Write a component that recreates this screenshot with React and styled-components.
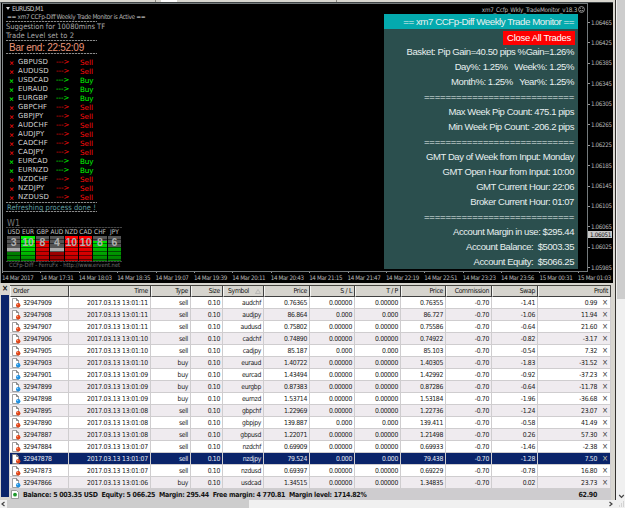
import styled, { createGlobalStyle } from 'styled-components';

const GlobalStyle = createGlobalStyle`
	* {
		box-sizing: border-box;
	}

	body {
		margin: 0;
		overflow: hidden;
		background: #f0f0f0;
		font-family: 'DejaVu Sans Condensed', 'DejaVu Sans', sans-serif;
	}
`;

const Page = styled.div`
	display: flex;
	width: 625px;
	height: 508px;
`;

const Main = styled.div`
	display: flex;
	flex-direction: column;
	width: 617px;
`;

const WindowFrame = styled.div`
	width: 616px;
	height: 500px;
	border-right: 1px solid #34322f;
	background: #d8d6d0;
`;

const TopStrip = styled.div`
	height: 2px;
	background: linear-gradient(
		90deg,
		#d9d7d0 0 155px,
		#8b8982 155px 156px,
		#d9d7d0 156px 161px,
		#fff 161px 177px,
		#d9d7d0 177px 336px,
		#8b8982 336px 337px,
		#d9d7d0 337px
	);
`;

/* ---------- chart ---------- */

const Chart = styled.div`
	width: 613px;
	height: 281px;
	padding-left: 1px;
	border-top: 1px solid #3f4445;
	border-left: 1px solid #8e9294;
	background: #000;
`;

const ChartRow = styled.div`
	display: flex;
	height: 269px;
`;

const Plot = styled.div`
	display: flex;
	justify-content: space-between;
	width: 586px;
	border: 1px solid #73797b;
	border-left-color: #85898b;
`;

const Signals = styled.div`
	width: 160px;
	padding-left: 3px;
`;

const Line = styled.div`
	height: ${(p) => p.$h || 9}px;
	padding-left: ${(p) => p.$x || 0}px;
	line-height: ${(p) => p.$lh || p.$h || 9}px;
	font-size: ${(p) => p.$size}px;
	letter-spacing: ${(p) => p.$ls || 0}px;
	color: ${(p) => p.$color};
	white-space: nowrap;
`;

const BarEnd = styled(Line)`
	font-family: 'Liberation Sans', sans-serif;
`;

const Timeframe = styled(Line)`
	padding-top: 8px;
	font-family: 'DejaVu Sans', sans-serif;
`;

const Caret = styled.span`
	display: inline-block;
	margin: 0 2px 1px 0;
	border: 2px solid transparent;
	border-top: 3px solid #d8d8d8;
	border-bottom: 0;
`;

const Dashes = styled.div`
	width: ${(p) => p.$w || 91}px;
	height: 1px;
	background: repeating-linear-gradient(90deg, ${(p) => p.$color || '#8a8a8a'} 0 2px, #222 2px 3px);
`;

const PairList = styled.div`
	padding: 4px 0 0 3px;
`;

const PairRow = styled.div`
	display: grid;
	grid-template-columns: 9px 38px 24px 20px;
	align-items: center;
	height: 9px;
	line-height: 9px;
	font-family: 'DejaVu Sans', sans-serif;
	font-size: 7px;
	white-space: nowrap;
	color: ${(p) => (p.$buy ? '#00ff00' : '#ff0c0c')};
`;

const Mark = styled.span`
	font-size: 6px;
	font-weight: bold;
`;

const PairName = styled.span`
	color: #d2d2d2;
	letter-spacing: 0.1px;
`;

const Action = styled.span`
	font-size: 7.2px;
	letter-spacing: ${(p) => (p.$buy ? -0.1 : 0)}px;
`;

const Meter = styled.div`
	display: grid;
	grid-template-columns: repeat(8, 13.4px);
	column-gap: 1px;
	width: 116px;
	margin-left: 1px;
`;

const MeterName = styled.span`
	height: 8px;
	line-height: 8px;
	text-align: center;
	font-size: 6.5px;
	color: #c4c4c4;
`;

const MeterBar = styled.div`
	height: 25px;
	line-height: 12px;
	text-align: center;
	font-family: 'Liberation Sans', sans-serif;
	font-size: 10.5px;
	font-weight: bold;
	color: #b0b0b0;
	background:
		repeating-linear-gradient(180deg, transparent 0 3px, rgba(0, 0, 0, 0.5) 3px 4px),
		linear-gradient(180deg, ${(p) => p.$fill});
`;

const PlotRight = styled.div`
	display: flex;
	flex-direction: column;
	align-items: flex-end;
	width: 206px;
`;

const Indicator = styled.div`
	display: flex;
	align-items: center;
	height: 10px;
	padding: 1px 2px 0 0;
	gap: 1px;
	font-size: 6.3px;
	letter-spacing: -0.25px;
	color: #bebebe;
`;

const Panel = styled.div`
	display: flex;
	flex-direction: column;
	align-items: flex-end;
	width: 194px;
	height: 255px;
	margin-right: 9px;
	padding-right: 4px;
	font-family: 'Liberation Sans', sans-serif;
	font-size: 9.5px;
	color: #e8f0f0;
	background: #2b4f4e;
`;

const PanelTitle = styled.div`
	width: 194px;
	height: 15px;
	margin-right: -4px;
	padding-right: 4px;
	line-height: 16px;
	text-align: right;
	font-size: 9.8px;
	letter-spacing: -0.5px;
	background: #04aaae;
`;

const CloseButton = styled.button`
	width: 72px;
	height: 14px;
	margin: 2px -1px 0 0;
	padding: 0;
	border: 0;
	font: inherit;
	line-height: 14px;
	letter-spacing: -0.3px;
	color: #fff;
	background: #fe0000;
`;

const PanelLines = styled.div`
	margin-top: -1px;
	text-align: right;
`;

const PanelLine = styled.div`
	height: 15px;
	line-height: 15px;
	letter-spacing: ${(p) => p.$ls}px;
	white-space: pre;
`;

const PriceAxis = styled.div`
	display: flex;
	flex-direction: column;
	padding-top: 14.5px;
`;

const Price = styled.div`
	display: flex;
	flex-shrink: 0;
	align-items: center;
	height: 20.45px;
	padding-bottom: 10.45px;
	font-size: 6.2px;
	line-height: 10px;
	letter-spacing: -0.35px;
	color: #b9b9b9;

	&:last-child {
		height: 10px;
		padding-bottom: 0;
	}

	&::before {
		content: '';
		width: 2px;
		height: 1px;
		margin-right: 1px;
		background: #999;
	}
`;

const Bid = styled.div`
	position: absolute;
	left: 588px;
	top: 231px;
	width: 24px;
	height: 7px;
	padding-left: 2px;
	font-size: 6.2px;
	line-height: 7px;
	letter-spacing: -0.3px;
	color: #111;
	background: #c9c9c9;
`;

const TimeAxis = styled.div`
	display: flex;
	height: 11px;
`;

const TimeLabel = styled.span`
	flex: 0 0 38.4px;
	height: 11px;
	line-height: 9px;
	font-size: 6.2px;
	letter-spacing: -0.35px;
	white-space: nowrap;
	color: #b9b9b9;

	&::before {
		content: '';
		display: block;
		width: 1px;
		height: 1px;
		background: #999;
	}
`;

/* ---------- terminal ---------- */

const Terminal = styled.div`
	display: flex;
	height: 217px;
	padding: 2px 0 3px 1px;
`;

const Side = styled.div`
	display: flex;
	flex-direction: column;
	align-items: center;
	width: 9px;
	padding-right: 1px;
`;

const SideFill = styled.div`
	width: 8px;
	flex: 1;
	margin-top: 1px;
	background: #0a246a;
`;

const CloseMark = styled.div`
	height: 9px;
	font-size: 8px;
	font-weight: bold;
	line-height: 8px;
	color: #111;
`;

const Table = styled.div`
	width: 601px;
	border-top: 1px solid #45443f;
`;

const columns = '59px 82px 40px 32px 41px 46px 45px 46px 45px 46px 46px 73px';

const HeadRow = styled.div`
	display: grid;
	grid-template-columns: ${columns};
	height: 11px;
`;

const HeadCell = styled.span`
	display: flex;
	align-items: center;
	justify-content: ${(p) => (p.$left ? 'flex-start' : 'flex-end')};
	padding: 0 2px 0 ${(p) => (p.$sorted ? 4 : 2)}px;
	gap: 6px;
	border-right: 1px solid #404040;
	border-bottom: 1px solid #404040;
	border-left: 1px solid #f5f5f2;
	background: #d6d4ce;
	font-size: 6.8px;
	letter-spacing: -0.3px;
	color: #111;
`;

const Row = styled.div`
	display: grid;
	grid-template-columns: ${columns};
	height: 12px;
	color: ${(p) => (p.$selected ? '#e4e8f2' : '#1a1a1a')};
	background: ${(p) => (p.$selected ? '#0a246a' : p.$odd ? '#efebef' : '#fff')};
`;

const Cell = styled.span`
	display: flex;
	align-items: center;
	justify-content: ${(p) => (p.$left ? 'flex-start' : 'flex-end')};
	padding: 0 ${(p) => (p.$last ? 0 : 2)}px 0 1px;
	gap: ${(p) => (p.$last ? 1 : 2)}px;
	border-right: 1px solid #cfcdcf;
	border-bottom: 1px solid #cfcdcf;
	font-size: 6.8px;
	letter-spacing: ${(p) => (p.$wide ? -0.18 : -0.32)}px;
	white-space: nowrap;
`;

const RowClose = styled.span`
	width: 12px;
	padding-left: 4px;
	font-size: 8px;
	color: ${(p) => (p.$selected ? '#c4c0a8' : '#444')};
`;

const Footer = styled.div`
	display: flex;
	align-items: center;
	justify-content: space-between;
	height: 11px;
	padding: 0 14px 0 1px;
	font-size: 7px;
	font-weight: bold;
	letter-spacing: -0.28px;
	color: #141414;
	background: #cecccf;
`;

const FooterText = styled.span`
	display: flex;
	align-items: center;
	gap: 4px;
	white-space: pre;
`;

/* ---------- scroll bars ---------- */

const HScroll = styled.div`
	display: flex;
	align-items: center;
	justify-content: space-between;
	height: 8px;
	padding-right: 3px;
	background: #f0f0f0;
`;

const HThumb = styled.div`
	width: 242px;
	height: 8px;
	margin-right: auto;
	background: #cdcdcd;
`;

const VScroll = styled.div`
	display: flex;
	flex-direction: column;
	align-items: center;
	width: 8px;
	background: #f0f0f0;
`;

const VThumb = styled.div`
	width: 8px;
	height: 299px;
	margin-bottom: auto;
	background: #cdcdcd;
`;

const Chevron = ({ d }) => (
	<svg width="7" height="8" viewBox="0 0 7 8">
		<path d={d} fill="none" stroke="#444" strokeWidth="1.2" />
	</svg>
);

const OrderIcon = ({ type }) => (
	<svg width="10" height="10" viewBox="0 0 10 10">
		<path d="M1.5 .5h4l2 2v7h-6z" fill="#fff" stroke="#8a8a8a" strokeWidth=".8" />
		<path d="M5.5 .5v2h2" fill="none" stroke="#555" strokeWidth=".7" />
		<circle cx="7.2" cy="7.3" r="2.2" fill={type === 'buy' ? '#1e8fe0' : '#e04418'} />
		<circle cx="6.6" cy="6.5" r=".7" fill={type === 'buy' ? '#8fd0ff' : '#ff9a70'} />
	</svg>
);

const BalanceIcon = () => (
	<svg width="8" height="9" viewBox="0 0 8 9">
		<path d="M.5 .5h5l2 2v6h-7z" fill="#fff" stroke="#888" strokeWidth=".8" />
		<circle cx="4" cy="4.7" r="1.9" fill="#1f9a2c" />
	</svg>
);

const Smiley = () => (
	<svg width="7" height="7" viewBox="0 0 7 7">
		<circle cx="3.5" cy="3.5" r="2.9" fill="none" stroke="#bbb" strokeWidth=".8" />
		<path d="M2.3 2.5h.7M4 2.5h.7M2 4.3q1.5 1.2 3 0" fill="none" stroke="#bbb" strokeWidth=".7" />
	</svg>
);

const pairs = [
	['GBPUSD', 0],
	['AUDUSD', 0],
	['USDCAD', 1],
	['EURAUD', 1],
	['EURGBP', 1],
	['GBPCHF', 0],
	['GBPJPY', 0],
	['AUDCHF', 0],
	['AUDJPY', 0],
	['CADCHF', 0],
	['CADJPY', 0],
	['EURCAD', 1],
	['EURNZD', 1],
	['NZDCHF', 0],
	['NZDJPY', 0],
	['NZDUSD', 0],
];

const meters = [
	['USD', 3, '#555 0 44%, #aaa 44% 66%, #007c00 66%'],
	['EUR', 10, '#00f000 0 30%, #00c800 60%, #007c00'],
	['GBP', 8, '#555 0 22%, #ee0000 22%, #b00000'],
	['AUD', 4, '#555 0 44%, #aaa 44% 66%, #9c0000 66%'],
	['NZD', 10, '#ff0000 0 30%, #e00000 60%, #b80000'],
	['CAD', 10, '#ff0000 0 30%, #e00000 60%, #b80000'],
	['CHF', 8, '#555 0 22%, #00e000 22%, #007c00'],
	['JPY', 6, '#555 0 44%, #00a800 44%, #007c00'],
];

const rule = '='.repeat(28);

const stats = [
	'Basket: Pip Gain=40.50 pips %Gain=1.26%',
	'Day%: 1.25%   Week%: 1.25%',
	'Month%: 1.25%   Year%: 1.25%',
	rule,
	'Max Week Pip Count: 475.1 pips',
	'Min Week Pip Count: -206.2 pips',
	rule,
	'GMT Day of Week from Input: Monday',
	'GMT Open Hour from Input: 10:00',
	'GMT Current Hour: 22:06',
	'Broker Current Hour: 01:07',
	rule,
	'Account Margin in use: $295.44',
	'Account Balance:  $5003.35',
	'Account Equity:  $5066.25',
];

const prices = [6465, 6425, 6385, 6345, 6305, 6265, 6225, 6185, 6145, 6105, 6065, 6025, 5985];

const times = [
	'14 Mar 2017',
	'14 Mar 17:31',
	'14 Mar 18:03',
	'14 Mar 18:35',
	'14 Mar 19:07',
	'14 Mar 19:39',
	'14 Mar 20:11',
	'14 Mar 20:43',
	'14 Mar 21:15',
	'14 Mar 21:47',
	'14 Mar 22:19',
	'14 Mar 22:51',
	'14 Mar 23:23',
	'14 Mar 23:56',
	'15 Mar 00:31',
	'15 Mar 01:03',
];

const heads = ['Order', 'Time', 'Type', 'Size', 'Symbol', 'Price', 'S / L', 'T / P', 'Price', 'Commission', 'Swap', 'Profit'];

// order, time, type, symbol, open price, current price, swap, profit
const orders = [
	['32947909', '11', 'sell', 'audchf', '0.76365', '0.76355', '-1.41', '0.99'],
	['32947908', '11', 'sell', 'audjpy', '86.864', '86.727', '-1.06', '11.94'],
	['32947907', '11', 'sell', 'audusd', '0.75802', '0.75586', '-0.64', '21.60'],
	['32947906', '10', 'sell', 'cadchf', '0.74890', '0.74922', '-0.82', '-3.17'],
	['32947905', '10', 'sell', 'cadjpy', '85.187', '85.103', '-0.54', '7.32'],
	['32947903', '10', 'buy', 'euraud', '1.40722', '1.40305', '-1.83', '-31.52'],
	['32947901', '09', 'buy', 'eurcad', '1.43494', '1.42992', '-0.92', '-37.23'],
	['32947899', '09', 'buy', 'eurgbp', '0.87383', '0.87286', '-0.64', '-11.78'],
	['32947898', '09', 'buy', 'eurnzd', '1.53714', '1.53184', '-1.96', '-36.68'],
	['32947895', '08', 'sell', 'gbpchf', '1.22969', '1.22736', '-1.24', '23.07'],
	['32947890', '08', 'sell', 'gbpjpy', '139.887', '139.411', '-0.58', '41.49'],
	['32947887', '08', 'sell', 'gbpusd', '1.22071', '1.21498', '0.26', '57.30'],
	['32947884', '07', 'sell', 'nzdchf', '0.69909', '0.69933', '-1.46', '-2.38'],
	['32947878', '07', 'sell', 'nzdjpy', '79.524', '79.438', '-1.28', '7.50'],
	['32947873', '07', 'sell', 'nzdusd', '0.69397', '0.69229', '-0.78', '16.80'],
	['32947866', '06', 'buy', 'usdcad', '1.34515', '1.34835', '0.02', '23.73'],
];

const SignalPane = () => (
	<Signals>
		<Line $size={6.6} $lh={10} $ls={-0.5} $color="#cfcfcf">
			<Caret />
			EURUSD,M1
		</Line>
		<Line $size={6.5} $h={8} $x={1} $ls={-0.37} $color="#b0b0b0">
			== xm7 CCFp-Diff Weekly Trade Monitor is Active ==
		</Line>
		<Dashes />
		<Line $size={7.5} $color="#a9a9a9">Suggestion for 10080mins TF</Line>
		<Line $size={7.5} $ls={0.1} $color="#a9a9a9">Trade Level set to 2</Line>
		<Dashes />
		<BarEnd $size={10} $h={12} $lh={13} $x={3} $ls={-0.27} $color="#e9967a">
			Bar end: 22:52:09
		</BarEnd>
		<Dashes />
		<PairList>
			{pairs.map(([name, buy]) => (
				<PairRow key={name} $buy={buy}>
					<Mark>×</Mark>
					<PairName>{name}</PairName>
					<span>---&gt;</span>
					<Action $buy={buy}>{buy ? 'Buy' : 'Sell'}</Action>
				</PairRow>
			))}
		</PairList>
		<Dashes />
		<Line $size={7.5} $h={8} $lh={9} $x={1} $ls={0.05} $color="#5f9ea0">Refreshing process done !</Line>
		<Dashes />
		<Timeframe $size={8} $h={15} $lh={8} $x={1} $color="#777">W1</Timeframe>
		<Dashes $w={116} $color="#444" />
		<Meter>
			{meters.map(([name]) => (
				<MeterName key={name}>{name}</MeterName>
			))}
			{meters.map(([name, value, fill]) => (
				<MeterBar key={name} $fill={fill}>{value}</MeterBar>
			))}
		</Meter>
		<Dashes $w={116} $color="#444" />
		<Line $size={5.8} $h={6} $x={3} $ls={-0.01} $color="#707070">CCFp-Diff - FerruFx - http://www.ervent.net</Line>
	</Signals>
);

const ChartPane = () => (
	<Chart>
		<ChartRow>
			<Plot>
				<SignalPane />
				<PlotRight>
					<Indicator>
						xm7_Ccfp_Wkly_TradeMonitor_v18.3
						<Smiley />
					</Indicator>
					<Panel>
						<PanelTitle>== xm7 CCFp-Diff Weekly Trade Monitor ==</PanelTitle>
						<CloseButton>Close All Trades</CloseButton>
						<PanelLines>
							{stats.map((text, i) => (
								<PanelLine key={i} $ls={text === rule ? -0.19 : -0.42}>{text}</PanelLine>
							))}
						</PanelLines>
					</Panel>
				</PlotRight>
			</Plot>
			<PriceAxis>
				{prices.map((p) => (
					<Price key={p}>1.0{p}</Price>
				))}
			</PriceAxis>
			<Bid>1.06051</Bid>
		</ChartRow>
		<TimeAxis>
			{times.map((t) => (
				<TimeLabel key={t}>{t}</TimeLabel>
			))}
		</TimeAxis>
	</Chart>
);

const TerminalPane = () => (
	<Terminal>
		<Side>
			<CloseMark>×</CloseMark>
			<SideFill />
		</Side>
		<Table>
			<HeadRow>
				{heads.map((h, i) => (
					<HeadCell key={i} $left={i === 0 || i === 4} $sorted={i === 4}>
						{h}
						{i === 4 && (
							<svg width="6" height="5" viewBox="0 0 6 5">
								<path d="M.5 4.5L3 .5l2.5 4z" fill="none" stroke="#aaa" strokeWidth=".7" />
							</svg>
						)}
					</HeadCell>
				))}
			</HeadRow>
			{orders.map(([id, sec, type, symbol, open, price, swap, profit], i) => {
				const zero = open.split('.')[1].length === 3 ? '0.000' : '0.00000';
				const selected = id === '32947878';
				return (
					<Row key={id} $odd={i % 2} $selected={selected}>
						<Cell $left>
							<OrderIcon type={type} />
							{id}
						</Cell>
						<Cell $wide>2017.03.13 13:01:{sec}</Cell>
						<Cell>{type}</Cell>
						<Cell>0.10</Cell>
						<Cell>{symbol}</Cell>
						<Cell>{open}</Cell>
						<Cell>{zero}</Cell>
						<Cell>{zero}</Cell>
						<Cell>{price}</Cell>
						<Cell>-0.70</Cell>
						<Cell>{swap}</Cell>
						<Cell $last>
							{profit}
							<RowClose $selected={selected}>×</RowClose>
						</Cell>
					</Row>
				);
			})}
			<Footer>
				<FooterText>
					<BalanceIcon />
					Balance: 5 003.35 USD  Equity: 5 066.25  Margin: 295.44  Free margin: 4 770.81  Margin level: 1714.82%
				</FooterText>
				<span>62.90</span>
			</Footer>
		</Table>
	</Terminal>
);

const App = () => {
	return (
		<Page>
			<GlobalStyle />
			<Main>
				<WindowFrame>
					<TopStrip />
					<ChartPane />
					<TerminalPane />
				</WindowFrame>
				<HScroll>
					<Chevron d="M4.5 2L2 4l2.5 2" />
					<HThumb />
					<Chevron d="M2.5 2L5 4L2.5 6" />
				</HScroll>
			</Main>
			<VScroll>
				<VThumb />
				<Chevron d="M1.2 3l2.3 2.3L5.8 3" />
				<svg width="7" height="8" viewBox="0 0 7 8">
					<path d="M5 2h1M3 4h1M5 4h1M1 6h1M3 6h1M5 6h1" stroke="#b5b5b5" />
				</svg>
			</VScroll>
		</Page>
	);
};

export default App;
